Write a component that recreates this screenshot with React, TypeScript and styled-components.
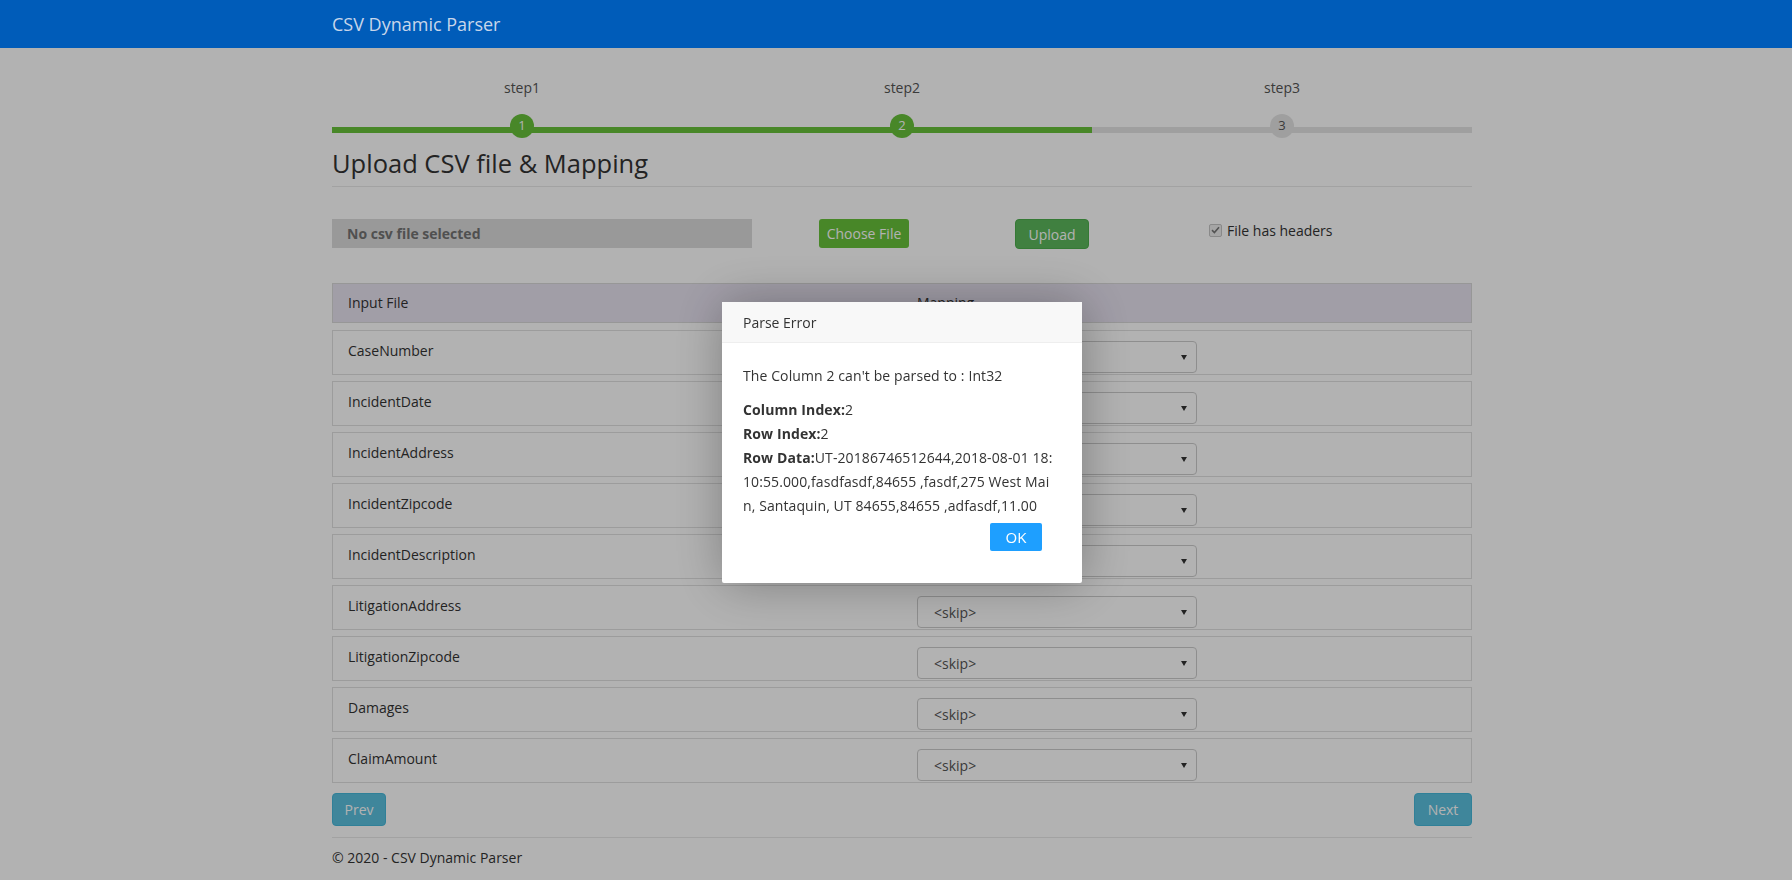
import React from "react";
import styled, { createGlobalStyle } from "styled-components";

const GlobalStyle = createGlobalStyle`
  html, body { margin: 0; padding: 0; background: #fff; }
  body {
    font-family: "Open Sans", "Noto Sans", sans-serif;
    font-size: 14px;
    color: #333;
  }
  * { box-sizing: border-box; }
`;

const NavBar = styled.header`
  position: relative;
  z-index: 1100;
  height: 48px;
  background: #005cb9;
  padding-left: 12px;
`;

const NavInner = styled.div`
  width: 1140px;
  margin: 0 auto;
  height: 48px;
  display: flex;
  align-items: center;
`;

const Brand = styled.span`
  font-size: 18px;
  color: #c8d6ea;
`;

const Page = styled.main`
  padding-left: 12px;
`;

const Container = styled.div`
  width: 1140px;
  margin: 0 auto;
`;

const Stepper = styled.div`
  display: grid;
  grid-template-columns: repeat(3, 1fr);
  padding-top: 30px;
`;

const Step = styled.div`
  display: flex;
  flex-direction: column;
  align-items: center;
`;

const StepLabel = styled.div`
  font-size: 14px;
  line-height: 20px;
  color: #555;
`;

const Track = styled.div<{ $done: boolean }>`
  position: relative;
  width: 100%;
  height: 24px;
  margin-top: 16px;
  display: flex;
  justify-content: center;
  &::before {
    content: "";
    position: absolute;
    left: 0;
    right: 0;
    top: 13px;
    height: 6px;
    background: ${(p) => (p.$done ? "#67c23a" : "#e4e4e4")};
  }
`;

const Circle = styled.span<{ $done: boolean }>`
  position: relative;
  z-index: 1;
  width: 24px;
  height: 24px;
  border-radius: 50%;
  background: ${(p) => (p.$done ? "#67c23a" : "#e4e4e4")};
  color: ${(p) => (p.$done ? "#fff" : "#555")};
  font-size: 13px;
  line-height: 22px;
  text-align: center;
`;

const Title = styled.h2`
  margin: 11px 0 0;
  font-size: 25.5px;
  font-weight: 400;
  line-height: 28px;
  color: #333;
  padding-bottom: 9px;
  border-bottom: 1px solid #e8e8e8;
`;

const UploadRow = styled.div`
  display: flex;
  align-items: center;
  margin-top: 31px;
  height: 30px;
`;

const FileBox = styled.div`
  width: 420px;
  height: 29px;
  background: #dcdcdc;
  color: #737373;
  font-weight: 700;
  font-size: 14px;
  line-height: 29px;
  padding-left: 15px;
`;

const ChooseButton = styled.button`
  margin-left: 67px;
  width: 90px;
  height: 29px;
  border: none;
  border-radius: 3px;
  background: #67c23a;
  color: #fff;
  font-family: inherit;
  font-size: 14px;
  padding: 0;
`;

const UploadButton = styled.button`
  margin-left: 106px;
  width: 74px;
  height: 30px;
  border: 1px solid #4cae4c;
  border-radius: 4px;
  background: #5cb85c;
  color: #fff;
  font-family: inherit;
  font-size: 14px;
  padding: 0;
  margin-top: 2px;
`;

const CheckLabel = styled.label`
  margin-left: 120px;
  display: flex;
  align-items: center;
  gap: 5px;
  font-size: 14px;
  color: #333;
  margin-top: -6px;
`;

const FakeCheck = styled.span`
  width: 13px;
  height: 13px;
  border: 1px solid #c4c4c4;
  border-radius: 2px;
  background: #ededed;
  display: inline-flex;
  align-items: center;
  justify-content: center;
`;

const Table = styled.div`
  margin-top: 35px;
  display: flex;
  flex-direction: column;
  gap: 6px;
`;

const HeaderRow = styled.div`
  display: grid;
  grid-template-columns: 1fr 1fr;
  height: 40px;
  background: #e7e2f0;
  border: 1px solid #d8d8d8;
  align-items: center;
  margin-bottom: 1px;
`;

const Row = styled.div`
  display: grid;
  grid-template-columns: 1fr 1fr;
  height: 45px;
  border: 1px solid #e0e0e0;
  align-items: start;
`;

const Cell = styled.div`
  padding: 0 15px;
  font-size: 14px;
  line-height: 20px;
  color: #333;
`;

const LabelCell = styled(Cell)`
  padding-top: 10px;
`;

const SelectWrap = styled.div`
  position: relative;
  width: 280px;
  margin-top: 10px;
  &::after {
    content: "";
    position: absolute;
    right: 10px;
    top: 14px;
    border-left: 3.5px solid transparent;
    border-right: 3.5px solid transparent;
    border-top: 5px solid #333;
    pointer-events: none;
  }
`;

const Select = styled.select`
  appearance: none;
  -webkit-appearance: none;
  width: 100%;
  height: 32px;
  border: 1px solid #ccc;
  border-radius: 4px;
  background: #fff;
  padding: 0 16px;
  font-family: inherit;
  font-size: 14px;
  color: #555;
  outline: none;
`;

const NavRow = styled.div`
  display: flex;
  justify-content: space-between;
  margin-top: 10px;
`;

const InfoButton = styled.button<{ $w: number }>`
  width: ${(p) => p.$w}px;
  height: 33px;
  border: 1px solid #46b8da;
  border-radius: 4px;
  background: #5bc0de;
  color: #fff;
  font-family: inherit;
  font-size: 14px;
  padding: 0;
`;

const Footer = styled.footer`
  margin-top: 11px;
  border-top: 1px solid #e8e8e8;
  padding-top: 10px;
  font-size: 14px;
  line-height: 20px;
  color: #333;
`;

const Backdrop = styled.div`
  position: fixed;
  inset: 0;
  background: rgba(0, 0, 0, 0.3);
  z-index: 1000;
`;

const Modal = styled.div`
  position: fixed;
  z-index: 1001;
  left: 722px;
  top: 302px;
  width: 360px;
  background: #fff;
  box-shadow: 1px 1px 50px rgba(0, 0, 0, 0.3);
  border-radius: 2px;
`;

const ModalHeader = styled.div`
  height: 41px;
  line-height: 41px;
  padding-left: 21px;
  background: #f8f8f8;
  border-bottom: 1px solid #eee;
  font-size: 14px;
  color: #333;
`;

const ModalBody = styled.div`
  padding: 21px 12px 0 21px;
  font-size: 14px;
  line-height: 24px;
  color: #333;
  letter-spacing: 0.1px;
`;

const Lead = styled.p`
  margin: 0 0 10px;
`;

const Detail = styled.div`
  white-space: nowrap;
`;

const ModalActions = styled.div`
  display: flex;
  justify-content: flex-end;
  padding: 5px 40px 32px 0;
`;

const OkButton = styled.button`
  width: 52px;
  height: 28px;
  border: none;
  border-radius: 2px;
  background: #1e9fff;
  color: #fff;
  font-family: inherit;
  font-size: 15px;
  padding: 0;
`;

const fields = [
  "CaseNumber",
  "IncidentDate",
  "IncidentAddress",
  "IncidentZipcode",
  "IncidentDescription",
  "LitigationAddress",
  "LitigationZipcode",
  "Damages",
  "ClaimAmount",
];

const steps = [
  { label: "step1", n: 1, done: true },
  { label: "step2", n: 2, done: true },
  { label: "step3", n: 3, done: false },
];

const rowDataLines = [
  "UT-20186746512644,2018-08-01 18:",
  "10:55.000,fasdfasdf,84655 ,fasdf,275 West Mai",
  "n, Santaquin, UT 84655,84655 ,adfasdf,11.00",
];

export default function App() {
  return (
    <>
      <GlobalStyle />
      <NavBar>
        <NavInner>
          <Brand>CSV Dynamic Parser</Brand>
        </NavInner>
      </NavBar>
      <Page>
        <Container>
          <Stepper>
            {steps.map((s) => (
              <Step key={s.n}>
                <StepLabel>{s.label}</StepLabel>
                <Track $done={s.done}>
                  <Circle $done={s.done}>{s.n}</Circle>
                </Track>
              </Step>
            ))}
          </Stepper>
          <Title>Upload CSV file &amp; Mapping</Title>
          <UploadRow>
            <FileBox>No csv file selected</FileBox>
            <ChooseButton>Choose File</ChooseButton>
            <UploadButton>Upload</UploadButton>
            <CheckLabel>
              <FakeCheck>
                <svg width="9" height="8" viewBox="0 0 9 8">
                  <path d="M1 4.2 L3.4 6.5 L8 1.2" fill="none" stroke="#777" strokeWidth="1.6" />
                </svg>
              </FakeCheck>
              File has headers
            </CheckLabel>
          </UploadRow>
          <Table>
            <HeaderRow>
              <Cell>Input File</Cell>
              <Cell>Mapping</Cell>
            </HeaderRow>
            {fields.map((f) => (
              <Row key={f}>
                <LabelCell>{f}</LabelCell>
                <Cell>
                  <SelectWrap>
                    <Select defaultValue="skip">
                      <option value="skip">&lt;skip&gt;</option>
                    </Select>
                  </SelectWrap>
                </Cell>
              </Row>
            ))}
          </Table>
          <NavRow>
            <InfoButton $w={54}>Prev</InfoButton>
            <InfoButton $w={58}>Next</InfoButton>
          </NavRow>
          <Footer>© 2020 - CSV Dynamic Parser</Footer>
        </Container>
      </Page>
      <Backdrop />
      <Modal>
        <ModalHeader>Parse Error</ModalHeader>
        <ModalBody>
          <Lead>The Column 2 can't be parsed to : Int32</Lead>
          <Detail>
            <strong>Column Index:</strong>2
          </Detail>
          <Detail>
            <strong>Row Index:</strong>2
          </Detail>
          <Detail>
            <strong>Row Data:</strong>
            {rowDataLines[0]}
          </Detail>
          <Detail>{rowDataLines[1]}</Detail>
          <Detail>{rowDataLines[2]}</Detail>
        </ModalBody>
        <ModalActions>
          <OkButton>OK</OkButton>
        </ModalActions>
      </Modal>
    </>
  );
}
